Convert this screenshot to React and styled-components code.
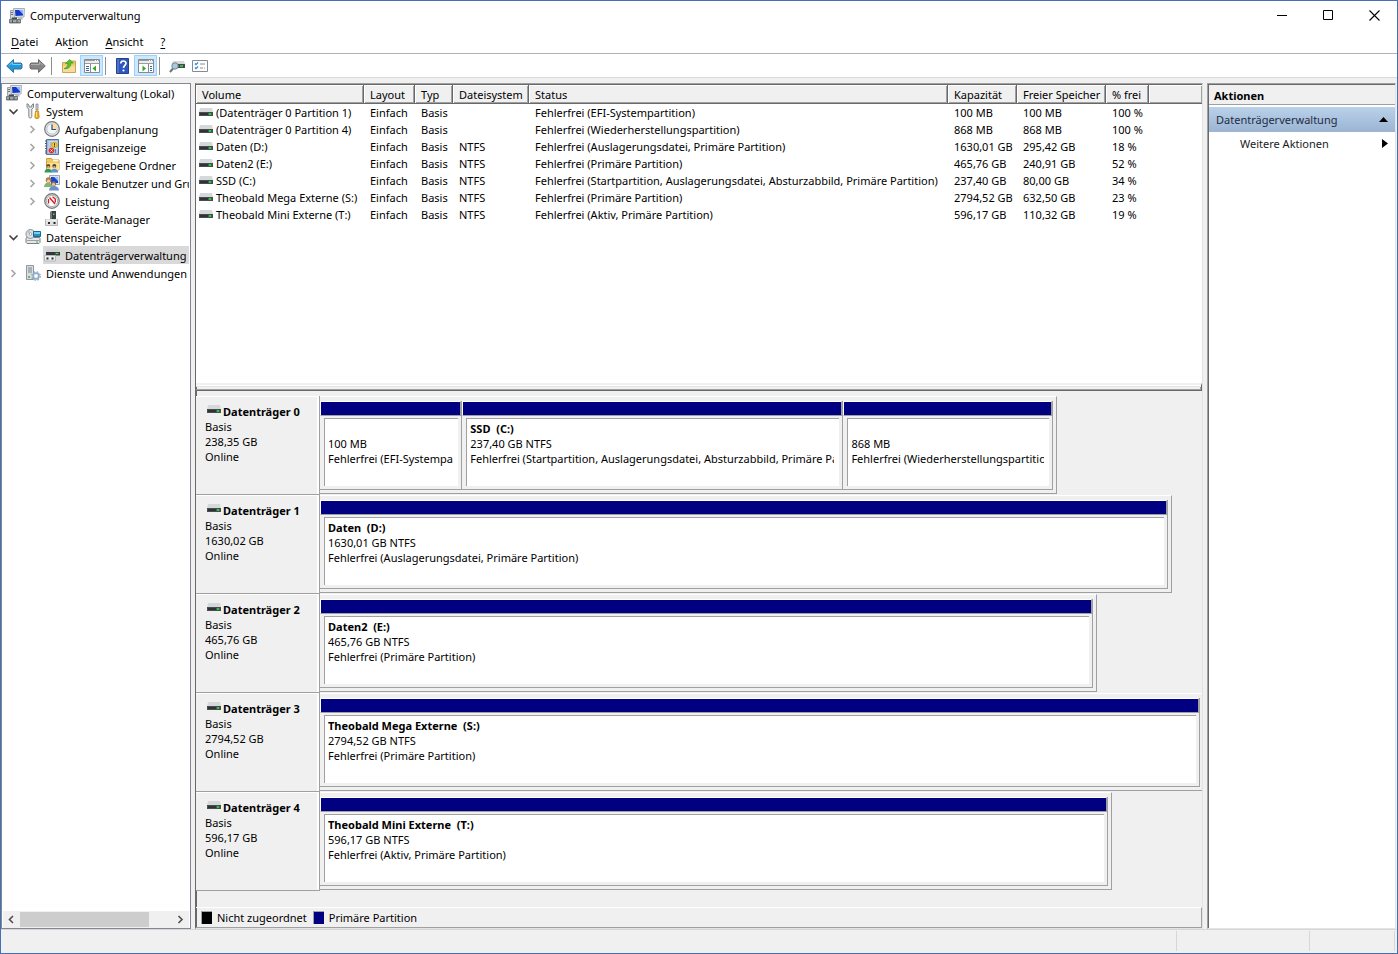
import React, { useState } from "react";
import styled, { createGlobalStyle } from "styled-components";

const GlobalStyle = createGlobalStyle`
    * {
        box-sizing: border-box;
    }
    body {
        margin: 0;
        color: #000;
        background: #f0f0f0;
        font-family: "Segoe UI", "Noto Sans", "Open Sans", sans-serif;
        font-size: 11px;
        line-height: 15px;
    }
    button {
        margin: 0;
        padding: 0;
        border: 0;
        background: transparent;
        color: inherit;
        font: inherit;
    }
    ul {
        margin: 0;
        padding: 0;
        list-style: none;
    }
    svg {
        display: block;
        flex: none;
    }
`;

const Window = styled.div`
    display: flex;
    flex-direction: column;
    height: 100vh;
    border: 1px solid #4470b4;
    background: #f0f0f0;
    overflow: hidden;
`;

const TitleBar = styled.header`
    display: flex;
    align-items: center;
    height: 29px;
    padding-left: 8px;
    background: #fff;
`;

const Title = styled.h1`
    flex: 1;
    margin: 0 0 0 5px;
    font-size: 11px;
    font-weight: 400;
`;

const CaptionButton = styled.button`
    display: flex;
    align-items: center;
    justify-content: center;
    width: 46px;
    height: 29px;
    &:hover {
        background: #e5e5e5;
    }
`;

const MenuBar = styled.nav`
    display: flex;
    align-items: center;
    gap: 17px;
    height: 24px;
    padding-left: 10px;
    background: #fff;
    border-bottom: 1px solid #b0b0b8;
`;

const MenuButton = styled.button`
    line-height: 22px;
    u {
        text-underline-offset: 2px;
    }
`;

const ToolBar = styled.div`
    display: flex;
    align-items: center;
    height: 24px;
    padding-left: 2px;
    background: #fff;
    border-bottom: 1px solid #d9d9d9;
`;

const ToolButton = styled.button`
    display: flex;
    align-items: center;
    justify-content: center;
    width: 23px;
    height: 21px;
    border: 1px solid ${props => props.$active ? "#99d1ff" : "transparent"};
    background: ${props => props.$active ? "#cce8ff" : "transparent"};
`;

const ToolDivider = styled.span`
    width: 1px;
    height: 18px;
    margin: 0 5px 0 2px;
    background: #8d8d8d;
`;

const Workspace = styled.main`
    display: flex;
    flex: 1;
    min-height: 0;
    gap: 4px;
    padding: 5px 1px 0 0;
`;

const TreePane = styled.nav`
    display: flex;
    flex-direction: column;
    width: 190px;
    padding: 0 1px;
    background: #fff;
    border: 1px solid #828790;
`;

const TreeList = styled.ul`
    flex: 1;
    overflow: hidden;
`;

const TreeRow = styled.li`
    display: flex;
    align-items: center;
    height: 18px;
    padding-left: ${props => props.$level * 19}px;
    white-space: nowrap;
`;

const TreeToggle = styled.button`
    display: flex;
    flex: none;
    align-items: center;
    justify-content: center;
    width: 21px;
    height: 18px;
`;

const TreeLabel = styled.span`
    display: flex;
    flex: 1;
    align-items: center;
    height: 18px;
    gap: 5px;
    padding-left: ${props => props.$root ? 3 : 1}px;
    background: ${props => props.$selected ? "#d9d9d9" : "transparent"};
`;

const ScrollBar = styled.div`
    display: flex;
    height: 17px;
    background: #f0f0f0;
`;

const ScrollButton = styled.button`
    display: flex;
    align-items: center;
    justify-content: center;
    width: 17px;
`;

const ScrollTrack = styled.div`
    flex: 1;
    padding: 1px 0;
`;

const ScrollThumb = styled.div`
    width: 85%;
    height: 15px;
    background: #cdcdcd;
`;

const SunkenPane = styled.section`
    display: flex;
    flex-direction: column;
    min-width: 0;
    border: 1px solid;
    border-color: #a0a0a0 #e3e3e3 #e3e3e3 #a0a0a0;
    box-shadow: inset 1px 1px 0 #696969;
    padding: 1px 0 0 1px;
`;

const CenterPane = styled(SunkenPane)`
    flex: 1;
    padding-left: 0;
    border-left-color: #696969;
`;

const VolumeArea = styled.div`
    height: 298px;
    background: #fff;
    overflow: hidden;
`;

const VolumeTable = styled.table`
    width: 100%;
    table-layout: fixed;
    border-collapse: separate;
    border-spacing: 0;
    th, td {
        padding: 0 0 0 6px;
        text-align: left;
        font-weight: 400;
        white-space: nowrap;
    }
    th {
        height: 19px;
        padding-top: 1px;
        background: #f0f0f0;
        border-right: 1px solid #696969;
        border-bottom: 1px solid #696969;
        box-shadow: inset 1px 1px 0 #fff, inset -1px -1px 0 #a0a0a0;
    }
    th:last-child {
        border-right: 0;
    }
    td {
        height: 17px;
    }
`;

const VolumeName = styled.div`
    display: flex;
    align-items: center;
    gap: 3px;
    margin-left: -3px;
`;

const Splitter = styled.div`
    height: 8px;
    border-top: 2px solid #f0f0f0;
    border-bottom: 1px solid #696969;
    border-right: 1px solid #696969;
    box-shadow: inset 0 1px 0 #fff, inset 0 2px 0 #e3e3e3, inset -1px -1px 0 #a0a0a0;
`;

const DiskArea = styled.div`
    flex: 1;
    min-height: 0;
    padding-top: 5px;
    overflow: hidden;
`;

const DiskRow = styled.section`
    display: flex;
    height: 99px;
`;

const DiskHead = styled.div`
    width: 124px;
    padding: 8px 0 0 9px;
    background: #f0f0f0;
    border-bottom: 1px solid #a0a0a0;
    border-right: 1px solid #a0a0a0;
    box-shadow: inset -2px 1px 0 #fff;
`;

const DiskTitle = styled.h2`
    display: flex;
    gap: 2px;
    margin: 0;
    padding-left: 2px;
    font-size: 11px;
    line-height: 15px;
    svg {
        margin-top: 1px;
    }
`;

const DiskTrack = styled.div`
    flex: 1;
    min-width: 0;
`;

const DiskBody = styled.div`
    display: flex;
    height: 98px;
    padding: 4px 3px 3px 0;
    border-top: 1px solid #fff;
    border-right: 1px solid #a0a0a0;
    border-bottom: 1px solid #a0a0a0;
`;

const Partition = styled.div`
    display: flex;
    flex-direction: column;
    flex: ${props => props.$weight} 1 0;
    min-width: 0;
    border-right: 1px solid #a0a0a0;
    border-bottom: 1px solid #a0a0a0;
`;

const PartitionBar = styled.div`
    height: 15px;
    background: #000080;
    border-left: 1px solid #fff;
    border-right: 1px solid #a0a0a0;
    border-top: 1px solid #fff;
    border-bottom: 1px solid #a0a0a0;
`;

const PartitionBox = styled.div`
    flex: 1;
    margin: 2px 3px 3px 4px;
    padding: 2px 5px 0 3px;
    background: #fff;
    border-top: 1px solid #a0a0a0;
    border-left: 1px solid #a0a0a0;
    overflow: hidden;
`;

const DiskText = styled.p`
    min-height: 15px;
    margin: 0;
    overflow: hidden;
    white-space: pre;
    font-weight: ${props => props.$strong ? 700 : 400};
`;

const Legend = styled.footer`
    display: flex;
    align-items: center;
    gap: 6px;
    height: 21px;
    padding-left: 5px;
    border-top: 1px solid #fff;
    border-right: 1px solid #a0a0a0;
    border-bottom: 1px solid #a0a0a0;
`;

const LegendItem = styled.span`
    display: flex;
    align-items: center;
    gap: 5px;
`;

const Swatch = styled.span`
    width: 11px;
    height: 13px;
    border: 1px solid #a0a0a0;
    border-width: 1px 0 0 1px;
    background: ${props => props.$color};
`;

const ActionPane = styled(SunkenPane)`
    width: 189px;
    background: #fff;
`;

const ActionTitle = styled.h2`
    height: 20px;
    margin: 0;
    padding: 1px 0 0 5px;
    background: #f0f0f0;
    border-bottom: 1px solid #a0a0a0;
    font-size: 11px;
    line-height: 20px;
`;

const ActionGroup = styled.button`
    display: flex;
    align-items: center;
    justify-content: space-between;
    height: 25px;
    margin-top: 2px;
    padding: 0 7px;
    background: linear-gradient(#bad1ea, #9ab4d2);
    color: #1e2c44;
`;

const ActionItem = styled.button`
    display: flex;
    align-items: center;
    justify-content: space-between;
    height: 23px;
    padding: 0 7px 0 31px;
    color: #1a1a24;
`;

const StatusBar = styled.footer`
    display: flex;
    height: 24px;
    padding: 1px 2px 2px 0;
    border-top: 1px solid #d7d7d7;
`;

const StatusCell = styled.div`
    width: ${props => props.$width};
    flex: ${props => props.$width ? "none" : 1};
    border-right: 1px solid #d7d7d7;
`;

const Icon = ({ children, width = 16, height = 16 }) => (
    <svg width={width} height={height} viewBox={`0 0 ${width} ${height}`} aria-hidden="true">{children}</svg>
);

const ComputerIcon = () => (
    <Icon>
        <path d="M1.500 2.500h4v8h-4z" fill="#d9dcdf" stroke="#9ba1a5" />
        <path d="M2 4.500h2M2 6.500h2" stroke="#6d7377" />
        <path d="M4.500 .5h11l-.5 8.500-9.500 .5z" fill="#dfe3e8" stroke="#a7afb8" />
        <path d="M6 2h8v5.500l-7.500 .5z" fill="#1437c8" />
        <path d="M10 2h4v4.500z" fill="#8fb4ff" />
        <path d="M9.500 9.500h3.500l1 2H9z" fill="#b4bbc0" />
        <path d="M3 9.500h5v2H3z" fill="#444c50" />
        <path d="M.5 11.500h11v3.500H.5z" fill="#7d8589" stroke="#5f676b" strokeWidth=".8" />
        <path d="M1 13h10" stroke="#c4c9cc" />
        <path d="M3.500 12v3M8 12v3" stroke="#4d5559" />
    </Icon>
);

const ToolsIcon = () => (
    <Icon>
        <path d="M2 .7v3.800l1.800 1.500v7.500c0 2 3 2 3 0V6l1.700-1.500V.7L6.800 2v2H4V2z" fill="#e9ebec" stroke="#71797e" strokeWidth=".9" />
        <path d="M11 1h2v6h-2z" fill="#d5d8da" stroke="#70777b" strokeWidth=".7" />
        <path d="M10.500 8h3l.7 6-1 1.500h-2.500l-.9-1.500z" fill="#f0ae16" stroke="#b97a09" strokeWidth=".7" />
        <path d="M11.500 9v5" stroke="#ffe28a" />
    </Icon>
);

const ClockIcon = () => (
    <Icon>
        <circle cx="8" cy="8" r="7.300" fill="#e3e5e6" stroke="#74797c" strokeWidth="1.200" />
        <circle cx="8" cy="8" r="5.200" fill="#eef6fc" stroke="#aab5bd" strokeWidth=".7" />
        <path d="M8 2.500A5.500 5.500 0 0 1 13.500 8H8z" fill="#ffd9a0" />
        <path d="M8 3.500V8.500h4" fill="none" stroke="#374e66" strokeWidth="1.200" />
    </Icon>
);

const EventIcon = () => (
    <Icon>
        <path d="M2.500 .5h12v15h-12z" fill="#9db8da" stroke="#5c7298" />
        <path d="M4.500 2h9v12h-9z" fill="#cfdeef" />
        <path d="M5.500 4h3M5.500 6h3M5.500 8h2" stroke="#7890b0" strokeWidth=".8" />
        <path d="M1 2h2M1 4.500h2M1 7h2M1 9.500h2M1 12h2M1 14h2" stroke="#4c5872" />
        <circle cx="10.500" cy="6" r="2.800" fill="#f5cf2c" stroke="#b28a00" strokeWidth=".6" />
        <path d="M10.500 4.200v2.300M10.500 7.200v.8" stroke="#333" />
        <circle cx="7.500" cy="11.500" r="2.800" fill="#df2a2a" />
        <path d="M6.500 10.500l2 2m0-2l-2 2" stroke="#fff" strokeWidth=".9" />
        <path d="M11.500 10v4" stroke="#5485c8" strokeWidth="1.500" />
    </Icon>
);

const SharedIcon = () => (
    <Icon>
        <path d="M2.500 3.500v-2h5l1 1.500h6.500v10h-12.500z" fill="#f0c860" stroke="#cc9c3c" />
        <path d="M3 6h12v7H3z" fill="#ffe090" />
        <path d="M9 3h5.500v1.500H9z" fill="#fff6d2" />
        <circle cx="4.300" cy="9" r="2" fill="#6d4a32" />
        <path d="M.5 15.500c0-5 7.500-5 7.500 0z" fill="#2d9b57" />
        <circle cx="10.300" cy="9" r="2" fill="#473f42" />
        <path d="M6.700 15.500c0-5 7.500-5 7.500 0z" fill="#5c94d3" />
        <path d="M3.300 10h2M9.300 10h2" stroke="#f5c59e" strokeWidth="1.500" />
    </Icon>
);

const UsersIcon = () => (
    <Icon>
        <path d="M5.500 .5h10v9h-10z" fill="#dde3e8" stroke="#9ba8b2" />
        <path d="M7 2h7v6H7z" fill="#1745cf" />
        <path d="M10 2h4v4z" fill="#9bbfff" />
        <circle cx="4.500" cy="5" r="2.800" fill="#b47c40" />
        <path d="M0 12c0-6 8-6 8 0z" fill="#85b570" />
        <circle cx="9.500" cy="8.500" r="2.500" fill="#806858" />
        <path d="M5 15.500c0-6 10-6 10 0z" fill="#6b91c7" />
        <circle cx="4.500" cy="6" r="1.600" fill="#f5cfaa" />
        <circle cx="9.500" cy="9.200" r="1.500" fill="#f0c7a2" />
    </Icon>
);

const GaugeIcon = () => (
    <Icon>
        <circle cx="8" cy="8" r="7.300" fill="#d9dcdd" stroke="#70777a" strokeWidth="1.200" />
        <circle cx="8" cy="8" r="5.600" fill="#fff" stroke="#969d9f" strokeWidth=".7" />
        <path d="M4.500 10.500V6M5.500 4.500l5.500 6.500M11.300 9.500V6L8.500 3.800" fill="none" stroke="#d7191f" strokeWidth="1.300" />
    </Icon>
);

const DeviceIcon = () => (
    <Icon>
        <path d="M6 1l1-1h5v9H6z" fill="#77797b" />
        <path d="M8 0h4v8H8z" fill="#3d4042" />
        <path d="M9 2.500h1.500v1.500H9z" fill="#40db5b" />
        <path d="M1.500 8.500h12v6h-12z" fill="#dfe1e2" stroke="#b4b8ba" />
        <path d="M4 11h2v2H4zM9.500 11h2v2h-2z" fill="#25292c" />
        <path d="M2 9h11" stroke="#fff" />
    </Icon>
);

const StorageIcon = () => (
    <Icon>
        <path d="M1.500 8.500h13l.5 1v4l-1 1h-12l-1-1v-4z" fill="#e4e6e8" stroke="#7b8184" />
        <path d="M2 11.500h12" stroke="#9ba1a4" />
        <path d="M11 13h2" stroke="#30bc4b" />
        <circle cx="5.500" cy="5" r="4.500" fill="#dfe2e5" stroke="#8a9196" />
        <path d="M5.500 5L1.500 3a4 4 0 0 1 3-2z" fill="#b5c4d0" />
        <circle cx="5.500" cy="5" r="1.300" fill="#fff" stroke="#858d91" strokeWidth=".7" />
        <path d="M8.500 2.500h7v5h-7z" fill="#1e95cd" stroke="#176892" />
        <path d="M9 4h6" stroke="#9bdef9" strokeWidth="1.500" />
    </Icon>
);

const DiskManageIcon = () => (
    <Icon>
        <path d="M3 1.500h12l1 3.500H2z" fill="#cfd1d3" />
        <path d="M2 5h14v3.500H2z" fill="#34373a" />
        <path d="M11.500 6.500h3" stroke="#35e34f" strokeWidth="1.300" />
        <path d="M.5 8.500h11v5.500H.5z" fill="#eceded" stroke="#b4b8ba" />
        <path d="M2.500 10.500h2v2h-2zM7.500 10.500h2v2h-2z" fill="#25292c" />
    </Icon>
);

const ServicesIcon = () => (
    <Icon>
        <path d="M1.500 .5h7v14h-7z" fill="#dadee0" stroke="#91989c" />
        <path d="M3 3h4M3 5h4M3 7h4" stroke="#7c858a" />
        <path d="M3 12h2" stroke="#2bae46" strokeWidth="1.500" />
        <circle cx="11" cy="11" r="3" fill="#d6e4ef" stroke="#8fabc2" strokeWidth="1.500" />
        <circle cx="11" cy="11" r="4.300" fill="none" stroke="#8fabc2" strokeWidth="1.200" strokeDasharray="1.800 1.600" />
        <circle cx="11" cy="11" r="1.200" fill="#fff" />
    </Icon>
);

const DriveIcon = () => (
    <Icon width={14} height={10}>
        <path d="M1 0h12l1 4H0z" fill="#d6d9dc" />
        <path d="M0 4h14v4H0z" fill="#4a4d50" />
        <path d="M1 5h12v2H1z" fill="#303335" />
        <path d="M9 6h4" stroke="#1b8a2e" strokeWidth="1.600" />
        <path d="M10 6h2" stroke="#59ff70" />
    </Icon>
);

const ArrowIcon = ({ back }) => (
    <Icon width={17} height={16}>
        <path
            d={back ? "M.7 8L7.500 1.500V5H15l1 1v4l-1 1H7.500v3.500z" : "M16.300 8L9.500 1.500V5H2L1 6v4l1 1h7.500v3.500z"}
            fill={back ? "#1f97dd" : "#858585"}
            stroke={back ? "#3c6d96" : "#6b6b6b"}
        />
        <path d={back ? "M3 7.500L6.500 4v2.500H15" : "M2 6.500h8.500V4L14 7.500"} fill="none" stroke={back ? "#6fd2fb" : "#b0b0b0"} />
    </Icon>
);

const FolderUpIcon = () => (
    <Icon>
        <path d="M1.500 4.500h6l1-1.500h6v11.500h-13z" fill="#edca78" stroke="#c9a65a" />
        <path d="M2 8h12v6H2z" fill="#f6dc9a" />
        <path d="M3 10.500c2.500-.5 4-2.500 4-5H4.500L8.500 1.500 12.500 5H10c0 4-3 6.500-7 5.500z" fill="#58bf27" stroke="#369312" strokeWidth=".6" />
    </Icon>
);

const PaneIcon = ({ right }) => (
    <Icon>
        <path d="M.5 1.500h15v13H.5z" fill="#fff" stroke="#858b91" />
        <path d="M1 2.500h14M1 5.500h14" stroke="#979da2" />
        <path d="M1 4h14" stroke="#d6d9dc" />
        <path d="M11 2.500h1M13 2.500h1" stroke="#fff" />
        <path d={right ? "M10.500 6v8" : "M6.500 6v8"} stroke="#858b91" />
        <path d={right ? "M12 8.500h2M12 10.500h2M12 12.500h2" : "M2 8.500h3M2 10.500h3M2 12.500h3"} stroke="#3c6794" />
        <path d={right ? "M4.500 7.500v6L8 10.500z" : "M12 7.500v6L8.500 10.500z"} fill="#35a52a" />
    </Icon>
);

const HelpIcon = () => (
    <Icon width={14}>
        <path d="M.5 .5h12v15H.5z" fill="#2f56bd" stroke="#27438c" />
        <path d="M2 1v14" stroke="#6b8cdd" />
        <path d="M4.800 5.500C4.800 2.200 10 2.200 10 5.300c0 2-2.500 2-2.500 4.700" fill="none" stroke="#fff" strokeWidth="1.700" />
        <circle cx="7.500" cy="12.500" r="1.100" fill="#fff" />
    </Icon>
);

const RescanIcon = () => (
    <Icon>
        <path d="M4 3h11l1 3H3z" fill="#d6d8da" />
        <path d="M3 6h13v4H3z" fill="#45494c" />
        <path d="M11 8h3" stroke="#32df4b" strokeWidth="1.500" />
        <path d="M4 10.500L1 14" stroke="#6b7378" strokeWidth="2" />
        <circle cx="6" cy="8" r="3.200" fill="#a9c9dc" stroke="#748997" />
    </Icon>
);

const ChecklistIcon = () => (
    <Icon>
        <path d="M.5 2.500h15v11H.5z" fill="#fff" stroke="#858b91" />
        <path d="M3 5.500l1 1.200L6 4.500M3 9.500l1 1.200L6 8.500" fill="none" stroke="#2d87d8" strokeWidth="1.200" />
        <path d="M8 6h5M8 10h3M12 10h1" stroke="#8a9095" />
    </Icon>
);

const Chevron = ({ direction, color = "#505050" }) => {
    const paths = {
        left: "M7 2L3.500 5.500 7 9",
        right: "M3.500 2L7 5.500 3.500 9",
        down: "M1.500 3.500L5.500 7.500 9.500 3.500",
    };
    return (
        <Icon width={11} height={11}>
            <path d={paths[direction]} fill="none" stroke={color} strokeWidth="1.600" />
        </Icon>
    );
};

const treeItems = [
    { name: "Aufgabenplanung", icon: ClockIcon, level: 1, closed: true },
    { name: "Ereignisanzeige", icon: EventIcon, level: 1, closed: true },
    { name: "Freigegebene Ordner", icon: SharedIcon, level: 1, closed: true },
    { name: "Lokale Benutzer und Gruppen", icon: UsersIcon, level: 1, closed: true },
    { name: "Leistung", icon: GaugeIcon, level: 1, closed: true },
    { name: "Geräte-Manager", icon: DeviceIcon, level: 1 },
];

const columns = [
    ["Volume", 168], ["Layout", 51], ["Typ", 38], ["Dateisystem", 76], ["Status", 419],
    ["Kapazität", 69], ["Freier Speicher", 89], ["% frei", 43],
];

const volumes = [
    ["(Datenträger 0 Partition 1)", "Einfach", "Basis", "", "Fehlerfrei (EFI-Systempartition)", "100 MB", "100 MB", "100 %"],
    ["(Datenträger 0 Partition 4)", "Einfach", "Basis", "", "Fehlerfrei (Wiederherstellungspartition)", "868 MB", "868 MB", "100 %"],
    ["Daten (D:)", "Einfach", "Basis", "NTFS", "Fehlerfrei (Auslagerungsdatei, Primäre Partition)", "1630,01 GB", "295,42 GB", "18 %"],
    ["Daten2 (E:)", "Einfach", "Basis", "NTFS", "Fehlerfrei (Primäre Partition)", "465,76 GB", "240,91 GB", "52 %"],
    ["SSD (C:)", "Einfach", "Basis", "NTFS", "Fehlerfrei (Startpartition, Auslagerungsdatei, Absturzabbild, Primäre Partition)", "237,40 GB", "80,00 GB", "34 %"],
    ["Theobald Mega Externe (S:)", "Einfach", "Basis", "NTFS", "Fehlerfrei (Primäre Partition)", "2794,52 GB", "632,50 GB", "23 %"],
    ["Theobald Mini Externe (T:)", "Einfach", "Basis", "NTFS", "Fehlerfrei (Aktiv, Primäre Partition)", "596,17 GB", "110,32 GB", "19 %"],
];

// share is the width of the disk bar in percent of the track
const disks = [
    {
        name: "Datenträger 0", size: "238,35 GB", share: 83.6,
        partitions: [
            { label: "", size: "100 MB", status: "Fehlerfrei (EFI-Systempartition)", weight: 142 },
            { label: "SSD  (C:)", size: "237,40 GB NTFS", status: "Fehlerfrei (Startpartition, Auslagerungsdatei, Absturzabbild, Primäre Partition)", weight: 382 },
            { label: "", size: "868 MB", status: "Fehlerfrei (Wiederherstellungspartition)", weight: 210 },
        ],
    },
    {
        name: "Datenträger 1", size: "1630,02 GB", share: 96.6,
        partitions: [{ label: "Daten  (D:)", size: "1630,01 GB NTFS", status: "Fehlerfrei (Auslagerungsdatei, Primäre Partition)", weight: 1 }],
    },
    {
        name: "Datenträger 2", size: "465,76 GB", share: 88.1,
        partitions: [{ label: "Daten2  (E:)", size: "465,76 GB NTFS", status: "Fehlerfrei (Primäre Partition)", weight: 1 }],
    },
    {
        name: "Datenträger 3", size: "2794,52 GB", share: 100.2,
        partitions: [{ label: "Theobald Mega Externe  (S:)", size: "2794,52 GB NTFS", status: "Fehlerfrei (Primäre Partition)", weight: 1 }],
    },
    {
        name: "Datenträger 4", size: "596,17 GB", share: 89.8,
        partitions: [{ label: "Theobald Mini Externe  (T:)", size: "596,17 GB NTFS", status: "Fehlerfrei (Aktiv, Primäre Partition)", weight: 1 }],
    },
];

const TreeNode = ({ name, icon: NodeIcon, level, open, closed, selected, onToggle }) => (
    <TreeRow $level={level}>
        {open || closed ? (
            <TreeToggle type="button" aria-label={name} aria-expanded={!!open} onClick={onToggle}>
                <Chevron direction={open ? "down" : "right"} color={open ? "#404040" : "#a6a6a6"} />
            </TreeToggle>
        ) : <TreeToggle as="span" />}
        <TreeLabel $selected={selected}><NodeIcon />{name}</TreeLabel>
    </TreeRow>
);

const Tree = () => {
    const [systemOpen, setSystemOpen] = useState(true);
    const [storageOpen, setStorageOpen] = useState(true);

    return (
        <TreePane>
            <TreeList>
                <TreeRow $level={0}>
                    <TreeLabel $root><ComputerIcon />Computerverwaltung (Lokal)</TreeLabel>
                </TreeRow>
                <TreeNode name="System" icon={ToolsIcon} level={0} open={systemOpen} closed={!systemOpen} onToggle={() => setSystemOpen(!systemOpen)} />
                {systemOpen && treeItems.map(item => <TreeNode key={item.name} {...item} />)}
                <TreeNode name="Datenspeicher" icon={StorageIcon} level={0} open={storageOpen} closed={!storageOpen} onToggle={() => setStorageOpen(!storageOpen)} />
                {storageOpen && <TreeNode name="Datenträgerverwaltung" icon={DiskManageIcon} level={1} selected />}
                <TreeNode name="Dienste und Anwendungen" icon={ServicesIcon} level={0} closed />
            </TreeList>
            <ScrollBar>
                <ScrollButton type="button" aria-label="Nach links"><Chevron direction="left" /></ScrollButton>
                <ScrollTrack><ScrollThumb /></ScrollTrack>
                <ScrollButton type="button" aria-label="Nach rechts"><Chevron direction="right" /></ScrollButton>
            </ScrollBar>
        </TreePane>
    );
};

const Volumes = () => (
    <VolumeArea>
        <VolumeTable>
            <colgroup>
                {columns.map(([name, width]) => <col key={name} width={width} />)}
                <col />
            </colgroup>
            <thead>
                <tr>
                    {columns.map(([name]) => <th key={name} scope="col">{name}</th>)}
                    <th />
                </tr>
            </thead>
            <tbody>
                {volumes.map(([name, ...cells]) => (
                    <tr key={name}>
                        <td><VolumeName><DriveIcon />{name}</VolumeName></td>
                        {cells.map((cell, i) => <td key={i}>{cell}</td>)}
                        <td />
                    </tr>
                ))}
            </tbody>
        </VolumeTable>
    </VolumeArea>
);

const Disk = ({ name, size, share, partitions }) => (
    <DiskRow>
        <DiskHead>
            <DiskTitle><DriveIcon />{name}</DiskTitle>
            <DiskText>Basis</DiskText>
            <DiskText>{size}</DiskText>
            <DiskText>Online</DiskText>
        </DiskHead>
        <DiskTrack>
            <DiskBody style={{ width: `${share}%` }}>
                {partitions.map(part => (
                    <Partition key={part.size} $weight={part.weight}>
                        <PartitionBar />
                        <PartitionBox>
                            <DiskText $strong>{part.label}</DiskText>
                            <DiskText>{part.size}</DiskText>
                            <DiskText>{part.status}</DiskText>
                        </PartitionBox>
                    </Partition>
                ))}
            </DiskBody>
        </DiskTrack>
    </DiskRow>
);

export default function App() {
    return (
        <Window>
            <GlobalStyle />
            <TitleBar>
                <ComputerIcon />
                <Title>Computerverwaltung</Title>
                <CaptionButton type="button" aria-label="Minimieren">
                    <Icon width={11} height={11}><path d="M0 5.500h10" stroke="#000" /></Icon>
                </CaptionButton>
                <CaptionButton type="button" aria-label="Maximieren">
                    <Icon width={11} height={11}><path d="M.5 .5h9v9h-9z" fill="none" stroke="#000" /></Icon>
                </CaptionButton>
                <CaptionButton type="button" aria-label="Schließen">
                    <Icon width={11} height={11}><path d="M.5 .5l10 10m0-10l-10 10" stroke="#000" strokeWidth="1.100" /></Icon>
                </CaptionButton>
            </TitleBar>
            <MenuBar>
                <MenuButton type="button"><u>D</u>atei</MenuButton>
                <MenuButton type="button">Ak<u>t</u>ion</MenuButton>
                <MenuButton type="button"><u>A</u>nsicht</MenuButton>
                <MenuButton type="button"><u>?</u></MenuButton>
            </MenuBar>
            <ToolBar>
                <ToolButton type="button" aria-label="Zurück"><ArrowIcon back /></ToolButton>
                <ToolButton type="button" aria-label="Vorwärts"><ArrowIcon /></ToolButton>
                <ToolDivider />
                <ToolButton type="button" aria-label="Eine Ebene nach oben"><FolderUpIcon /></ToolButton>
                <ToolButton type="button" aria-label="Konsolenstruktur" $active><PaneIcon /></ToolButton>
                <ToolDivider />
                <ToolButton type="button" aria-label="Hilfe"><HelpIcon /></ToolButton>
                <ToolButton type="button" aria-label="Aktionsbereich" $active><PaneIcon right /></ToolButton>
                <ToolDivider />
                <ToolButton type="button" aria-label="Datenträger neu einlesen"><RescanIcon /></ToolButton>
                <ToolButton type="button" aria-label="Eigenschaften"><ChecklistIcon /></ToolButton>
            </ToolBar>
            <Workspace>
                <Tree />
                <CenterPane>
                    <Volumes />
                    <Splitter />
                    <DiskArea>
                        {disks.map(disk => <Disk key={disk.name} {...disk} />)}
                    </DiskArea>
                    <Legend>
                        <LegendItem><Swatch $color="#000" />Nicht zugeordnet</LegendItem>
                        <LegendItem><Swatch $color="#000080" />Primäre Partition</LegendItem>
                    </Legend>
                </CenterPane>
                <ActionPane>
                    <ActionTitle>Aktionen</ActionTitle>
                    <ActionGroup type="button">
                        Datenträgerverwaltung
                        <Icon width={9} height={5}><path d="M0 5L4.500 0 9 5z" /></Icon>
                    </ActionGroup>
                    <ActionItem type="button">
                        Weitere Aktionen
                        <Icon width={6} height={9}><path d="M0 0l6 4.500L0 9z" /></Icon>
                    </ActionItem>
                </ActionPane>
            </Workspace>
            <StatusBar>
                <StatusCell />
                <StatusCell $width="133px" />
                <StatusCell $width="85px" />
            </StatusBar>
        </Window>
    );
}
